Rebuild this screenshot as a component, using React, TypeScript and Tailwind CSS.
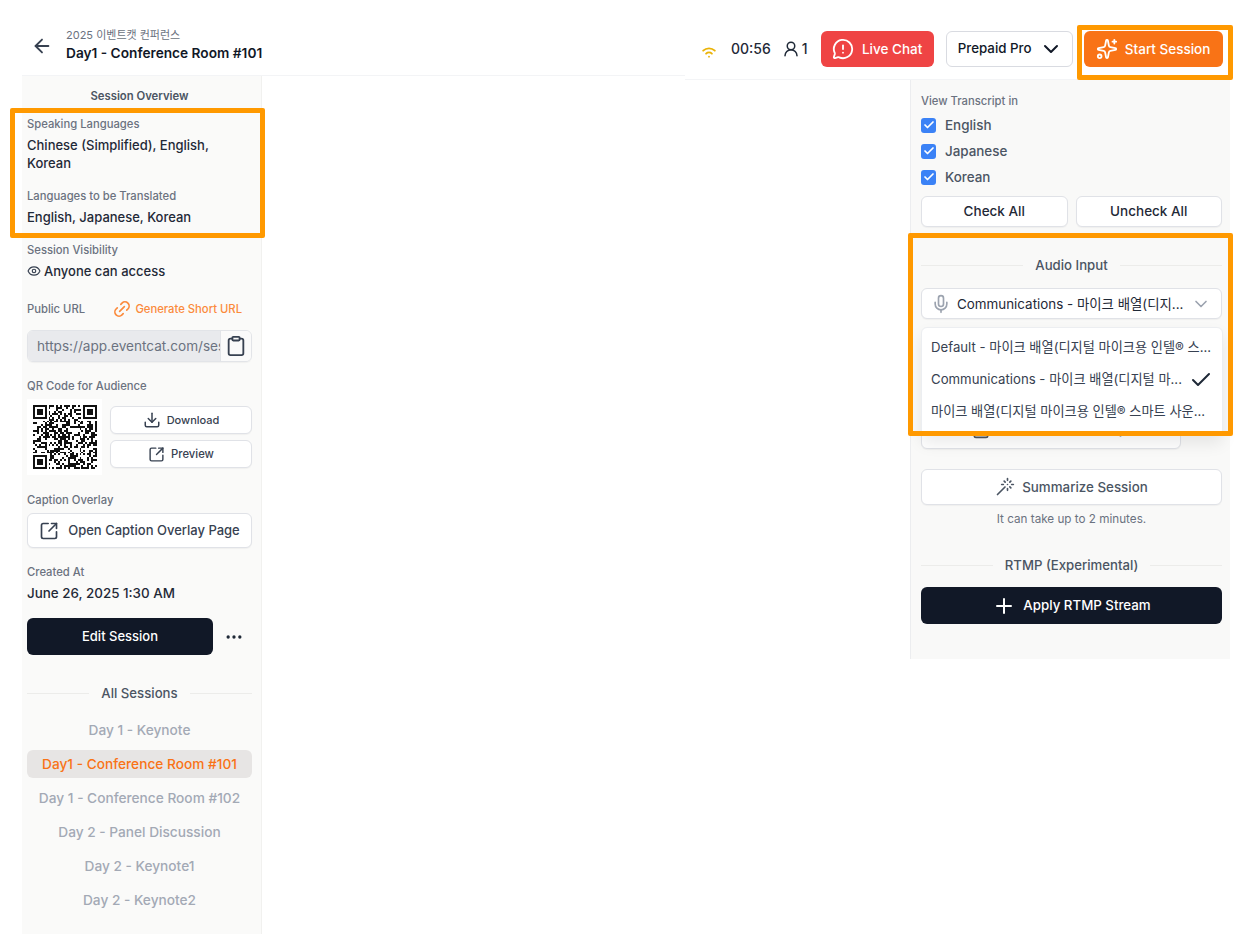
import React from "react";
import { ArrowLeft, WifiHigh, UserRound, MessageCircleWarning, ChevronDown, Sparkles, Check, Mic, Download, SquareArrowOutUpRight, Clipboard, Link2, Eye, MoreHorizontal, Wand, Plus, FileText } from "lucide-react";

const FONT = "font-['Inter','Noto_Sans_CJK_KR',sans-serif]";

function QR() {
  const n = 33;
  const cells: string[] = [];
  let s = 20250626;
  const rnd = () => {
    s = (s * 1664525 + 1013904223) >>> 0;
    return (s >>> 16) % 100;
  };
  const inFinder = (x: number, y: number) =>
    (x < 8 && y < 8) || (x >= n - 8 && y < 8) || (x < 8 && y >= n - 8);
  for (let y = 0; y < n; y++) {
    for (let x = 0; x < n; x++) {
      if (!inFinder(x, y) && rnd() < 50) cells.push(`M${x} ${y}h1v1h-1z`);
    }
  }
  const finder = (x: number, y: number) =>
    `M${x} ${y}h7v7h-7zM${x + 1} ${y + 1}v5h5v-5zM${x + 2} ${y + 2}h3v3h-3z`;
  return (
    <svg viewBox={`0 0 ${n} ${n}`} className="w-[64px] h-[64px]" shapeRendering="crispEdges">
      <path d={cells.join("")} fill="#111" />
      <path d={finder(0, 0) + finder(n - 7, 0) + finder(0, n - 7)} fill="#111" fillRule="evenodd" />
    </svg>
  );
}

function Label({ children, className = "" }: { children: React.ReactNode; className?: string }) {
  return <div className={`text-[11.25px] leading-4 font-medium text-[#6b7280] ${className}`}>{children}</div>;
}

function Value({ children, className = "" }: { children: React.ReactNode; className?: string }) {
  return <div className={`text-[13px] leading-[18px] font-medium text-[#1f2937] ${className}`}>{children}</div>;
}

function Divider({ children, className = "" }: { children: React.ReactNode; className?: string }) {
  return (
    <div className={`flex items-center gap-3 ${className}`}>
      <div className="flex-1 h-px bg-[#ececea]" />
      <div className="text-[13.2px] leading-[18px] font-medium text-[#4b5563]">{children}</div>
      <div className="flex-1 h-px bg-[#ececea]" />
    </div>
  );
}

function WhiteButton({ children, className = "" }: { children: React.ReactNode; className?: string }) {
  return (
    <div className={`flex items-center justify-center bg-white border border-[#e0e2e7] rounded-md shadow-[0_1px_1px_rgba(0,0,0,0.04)] ${className}`}>
      {children}
    </div>
  );
}

function Sidebar() {
  const sessions = ["Day 1 - Keynote", "Day1 - Conference Room #101", "Day 1 - Conference Room #102", "Day 2 - Panel Discussion", "Day 2 - Keynote1", "Day 2 - Keynote2"];
  return (
    <div className="w-[240px] h-[858px] bg-[#fafaf9] border-r border-[#f1f1ef] pl-[5px] pr-[9px] pt-3">
      <div className="text-[11.3px] leading-4 font-semibold text-[#4b5563] text-center">Session Overview</div>
      <Label className="mt-3">Speaking Languages</Label>
      <Value className="mt-1">Chinese (Simplified), English, Korean</Value>
      <Label className="mt-4">Languages to be Translated</Label>
      <Value className="mt-1">English, Japanese, Korean</Value>
      <Label className="mt-4">Session Visibility</Label>
      <Value className="mt-1 flex items-center gap-[3px]">
        <Eye className="w-[14px] h-[14px] text-[#374151]" />
        Anyone can access
      </Value>
      <div className="mt-[21px] h-4 flex items-center justify-between pr-[10px]">
        <Label>Public URL</Label>
        <div className="flex items-center gap-[3px] text-[11.25px] leading-4 font-medium text-[#fb8a3c]">
          <Link2 className="w-[20px] h-[20px] -rotate-45" />
          Generate Short URL
        </div>
      </div>
      <div className="mt-[13px] h-8 flex rounded-md border border-[#e2e4e8] overflow-hidden shadow-[0_1px_1px_rgba(0,0,0,0.04)]">
        <div className="flex-1 min-w-0 bg-[#e9eaed] pl-[9px] text-[13.6px] leading-[30px] text-[#6b7280] overflow-hidden whitespace-nowrap">https://app.eventcat.com/session</div>
        <div className="w-[31px] shrink-0 bg-[#fafafa] border-l border-[#e2e4e8] flex items-center justify-center">
          <Clipboard className="w-[22px] h-[22px] text-[#374151]" />
        </div>
      </div>
      <Label className="mt-4">QR Code for Audience</Label>
      <div className="mt-[5px] flex gap-2">
        <div className="w-[75px] h-[76px] bg-white flex items-center justify-center shrink-0">
          <QR />
        </div>
        <div className="flex-1 flex flex-col gap-[6px] pt-[7px]">
          <WhiteButton className="h-7 gap-[6px] text-[11px] font-medium text-[#374151]">
            <Download className="w-[18px] h-[18px]" />
            Download
          </WhiteButton>
          <WhiteButton className="h-7 gap-[6px] text-[11.25px] font-medium text-[#374151]">
            <SquareArrowOutUpRight className="w-[17px] h-[17px]" />
            Preview
          </WhiteButton>
        </div>
      </div>
      <Label className="mt-[17px]">Caption Overlay</Label>
      <WhiteButton className="mt-[5px] h-[35px] gap-[9px] text-[13px] font-medium text-[#374151]">
        <SquareArrowOutUpRight className="w-[20px] h-[20px]" />
        Open Caption Overlay Page
      </WhiteButton>
      <Label className="mt-4">Created At</Label>
      <Value className="mt-1 !text-[13.4px]">June 26, 2025 1:30 AM</Value>
      <div className="mt-4 flex items-center">
        <div className="w-[186px] h-[37px] rounded-md bg-[#111827] text-white text-[13px] font-medium flex items-center justify-center">Edit Session</div>
        <MoreHorizontal className="w-5 h-5 ml-[11px] text-[#1f2937]" />
      </div>
      <Divider className="mt-[29px]">All Sessions</Divider>
      <div className="mt-[14px] flex flex-col gap-[6px]">
        {sessions.map((t, i) => (
          <div key={t} className={`h-7 rounded-md flex items-center justify-center text-[13.7px] font-medium whitespace-nowrap ${i === 1 ? "bg-[#e7e5e4] text-[#f97316]" : "text-[#a3a9b5]"}`}>
            {t}
          </div>
        ))}
      </div>
    </div>
  );
}

function Panel() {
  return (
    <div className="w-[320px] bg-[#f9f9f8] border-l border-[#ecedef] pl-[10px] pr-2 pt-[13px] pb-[35px]">
      <Label>View Transcript in</Label>
      <div className="mt-[7px] flex flex-col gap-2">
        {["English", "Japanese", "Korean"].map((t) => (
          <div key={t} className="h-[18px] flex items-center gap-[9px] text-[13.4px] text-[#4b5563] font-medium">
            <div className="w-[15px] h-[15px] rounded-[3px] bg-[#3b82f6] flex items-center justify-center">
              <Check className="w-3 h-3 text-white" strokeWidth={3.5} />
            </div>
            {t}
          </div>
        ))}
      </div>
      <div className="mt-[10px] flex gap-2">
        <WhiteButton className="flex-1 h-[31px] text-[13.5px] font-medium text-[#1f2937]">Check All</WhiteButton>
        <WhiteButton className="flex-1 h-[31px] text-[13.5px] font-medium text-[#1f2937]">Uncheck All</WhiteButton>
      </div>
      <Divider className="mt-[29px]">Audio Input</Divider>
      <WhiteButton className="mt-[14px] h-[31px] !justify-start pl-[9px] pr-[10px] text-[13.4px] text-[#1f2937]">
        <Mic className="w-5 h-5 text-[#9ca3af] shrink-0" />
        <span className="ml-[6px] flex-1 whitespace-nowrap pt-px">Communications - 마이크 배열(디지...</span>
        <ChevronDown className="w-[20px] h-[20px] text-[#9ca3af]" />
      </WhiteButton>
      <WhiteButton className="mt-[90px] mr-[41px] h-[40px] gap-2 text-[13.4px] font-medium text-[#4b5563]">
        <FileText className="w-5 h-5" />
        Download Transcript
      </WhiteButton>
      <WhiteButton className="mt-5 h-[36px] gap-[7px] text-[13.35px] font-medium text-[#4b5563]">
        <Wand className="w-[20px] h-[20px]" />
        Summarize Session
      </WhiteButton>
      <div className="mt-[6px] text-[11.7px] leading-4 text-[#6b7280] text-center">It can take up to 2 minutes.</div>
      <Divider className="mt-[29px]">RTMP (Experimental)</Divider>
      <div className="mt-[13px] h-[37px] rounded-md bg-[#111827] text-white text-[13.3px] font-medium flex items-center justify-center gap-[7px]">
        <Plus className="w-6 h-6" />
        Apply RTMP Stream
      </div>
    </div>
  );
}

function Highlight({ className }: { className: string }) {
  return <div className={`absolute border-[5px] border-[#ff9900] rounded-[2px] ${className}`} />;
}

export default function App() {
  return (
    <div className={`relative w-[1252px] h-[934px] bg-white overflow-hidden pl-[22px] flex ${FONT}`}>
      <div className="w-[663px] shrink-0">
        <div className="h-[76px] border-b border-[#f3f4f6] flex items-center pt-[14px]">
          <ArrowLeft className="ml-[9px] w-[22px] h-[22px] text-[#374151] mt-[3px]" />
          <div className="ml-[13px]">
            <div className="text-[11px] leading-[16px] text-[#6b7280]">2025 이벤트캣 컨퍼런스</div>
            <div className="text-[13.7px] leading-[20px] font-semibold text-[#111827] whitespace-nowrap">Day1 - Conference Room #101</div>
          </div>
        </div>
        <Sidebar />
      </div>
      <div className="w-[545px] shrink-0">
        <div className="h-[80px] border-b border-[#f3f4f6] flex items-center pt-[19px]">
          <WifiHigh className="ml-[14px] w-[20px] h-[20px] text-[#eab308] mt-[2px]" strokeWidth={2.2} />
          <div className="ml-[12px] text-sm font-medium text-[#1f2937]">00:56</div>
          <UserRound className="ml-[11px] w-[18px] h-[18px] text-[#1f2937]" />
          <div className="ml-[2px] text-sm font-medium text-[#1f2937]">1</div>
          <div className="ml-[13px] w-[113px] h-9 rounded-md bg-[#ef4444] text-white text-[13.5px] font-medium flex items-center justify-center gap-[8px]">
            <MessageCircleWarning className="w-[22px] h-[22px]" />
            Live Chat
          </div>
          <div className="ml-3 w-[127px] h-9 rounded-md bg-white border border-[#d9dbe1] pl-[3px] text-[13.3px] font-medium text-[#111827] flex items-center justify-center gap-[8px]">
            Prepaid Pro
            <ChevronDown className="w-6 h-6" />
          </div>
          <div className="ml-[11px] w-[139px] h-9 rounded-md bg-[#f97316] text-white text-[13.5px] font-medium flex items-center justify-center gap-[7px]">
            <Sparkles className="w-[22px] h-[22px]" />
            Start Session
          </div>
        </div>
        <div className="flex justify-end">
          <Panel />
        </div>
      </div>

      <div className="absolute left-[921px] top-[327px] w-[302px] h-[109px] bg-white rounded-md border border-[#eceef1] shadow-[0_8px_16px_rgba(0,0,0,0.08)] pl-[9px] pr-[11px] text-[13.2px] text-[#374151]">
        <div className="h-[33px] mt-[3px] flex items-center whitespace-nowrap">Default - 마이크 배열(디지털 마이크용 인텔® 스...</div>
        <div className="h-[32px] flex items-center justify-between whitespace-nowrap">
          Communications - 마이크 배열(디지털 마...
          <Check className="w-6 h-6 text-[#1f2937] -mr-[2px]" />
        </div>
        <div className="h-[32px] flex items-center whitespace-nowrap">마이크 배열(디지털 마이크용 인텔® 스마트 사운...</div>
      </div>

      <Highlight className="left-[10px] top-[108px] w-[255px] h-[130px]" />
      <Highlight className="left-[1077px] top-[25px] w-[156px] h-[55px]" />
      <Highlight className="left-[908px] top-[233px] w-[325px] h-[203px]" />
    </div>
  );
}
